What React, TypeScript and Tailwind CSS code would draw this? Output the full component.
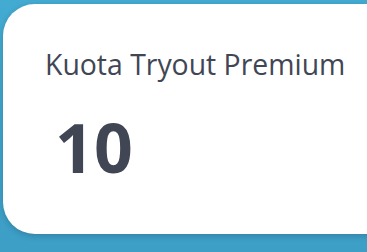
export default function App() {
  return (
    <div className="h-[252px] w-[367px] overflow-hidden bg-gradient-to-b from-[#43aad1] to-[#3d9ec6] pt-[4px] pl-[3px]">
      <div className="flex h-[230px] w-[420px] flex-col rounded-[32px] bg-white pt-[41px] pl-[42px] shadow-[0_2px_6px_rgba(0,0,0,0.18)] font-['Open_Sans',sans-serif] text-[#414655]">
        <div className="text-[28.4px] leading-[38px]">Kuota Tryout Premium</div>
        <div className="mt-[30px] pl-[10px] text-[68px] font-bold leading-[68px]">10</div>
      </div>
    </div>
  );
}
